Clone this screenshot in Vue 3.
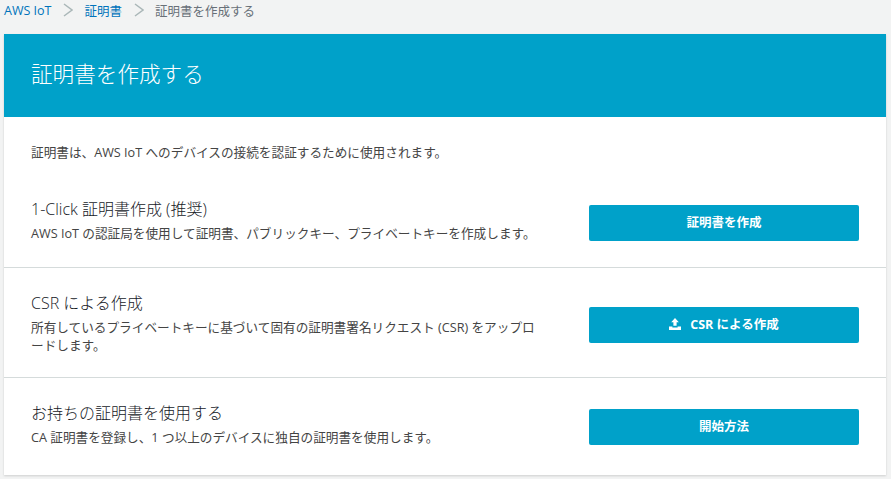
<template>
  <div class="page">
    <nav class="crumbs">
      <a>AWS IoT</a>
      <svg class="chev" viewBox="0 0 10 14"><path d="M1 1l8 6-8 6" /></svg>
      <a>証明書</a>
      <svg class="chev" viewBox="0 0 10 14"><path d="M1 1l8 6-8 6" /></svg>
      <span>証明書を作成する</span>
    </nav>

    <section class="card">
      <h1 class="head">証明書を作成する</h1>
      <p class="intro">証明書は、AWS IoT へのデバイスの接続を認証するために使用されます。</p>

      <div v-for="row in rows" :key="row.title" class="row" :class="row.cls">
        <div class="info">
          <h2>{{ row.title }}</h2>
          <p>{{ row.text }}</p>
        </div>
        <button class="btn">
          <svg v-if="row.icon" class="upload" viewBox="0 0 12 12">
            <path d="M6 0l3.8 4.2H7.6v3.6H4.4V4.2H2.2z" />
            <path d="M0 8.4h3.4v1h5.2v-1H12V12H0z" />
          </svg>
          {{ row.button }}
        </button>
      </div>
    </section>
  </div>
</template>

<script setup>
const rows = [
  {
    cls: "first",
    title: "1-Click 証明書作成 (推奨)",
    text: "AWS IoT の認証局を使用して証明書、パブリックキー、プライベートキーを作成します。",
    button: "証明書を作成",
  },
  {
    cls: "second",
    title: "CSR による作成",
    text: "所有しているプライベートキーに基づいて固有の証明書署名リクエスト (CSR) をアップロードします。",
    button: "CSR による作成",
    icon: true,
  },
  {
    cls: "third",
    title: "お持ちの証明書を使用する",
    text: "CA 証明書を登録し、1 つ以上のデバイスに独自の証明書を使用します。",
    button: "開始方法",
  },
];
</script>

<style>
body {
  background: #f2f3f3;
}
</style>

<style scoped>
.page {
  height: 479px;
  overflow: hidden;
  padding: 0 5px 0 4px;
  box-sizing: border-box;
  font-family: "Open Sans", "Noto Sans CJK JP", sans-serif;
  color: #444;
}
.crumbs {
  height: 34px;
  padding-bottom: 14px;
  box-sizing: border-box;
  display: flex;
  align-items: center;
  font-size: 12.5px;
  color: #687078;
}
.crumbs a {
  color: #0073bb;
}
.chev {
  width: 10px;
  height: 14px;
  margin: 0 11px 0 12px;
  fill: none;
  stroke: #aab7b8;
  stroke-width: 1.5;
}
.card {
  background: #fff;
  box-shadow: 0 1px 2px rgb(0 0 0 / 15%);
}
.head {
  margin: 0;
  height: 83px;
  padding: 0 0 6px 27px;
  box-sizing: border-box;
  display: flex;
  align-items: center;
  background: #00a1c9;
  color: #fff;
  font-size: 21.6px;
  font-weight: 300;
}
.intro {
  margin: 0;
  padding: 26px 27px 0;
  font-size: 12.65px;
  line-height: 18px;
}
.row {
  display: flex;
  justify-content: space-between;
  box-sizing: border-box;
  padding: 24px 27px 0;
  border-bottom: 1px solid #d5dbdb;
}
.row:last-child {
  border-bottom: none;
}
.first {
  height: 107px;
  padding-top: 37px;
}
.second {
  height: 110px;
}
.third {
  height: 97px;
}
.info {
  width: 510px;
}
.info h2 {
  margin: 0 0 4px;
  font-size: 16px;
  line-height: 22px;
  font-weight: 300;
  color: #16191f;
}
.info p {
  margin: 0;
  font-size: 12.65px;
  line-height: 18px;
}
.btn {
  width: 270px;
  height: 36px;
  margin-top: 7px;
  padding: 0 0 3px;
  border: none;
  border-radius: 2px;
  background: #00a1c9;
  color: #fff;
  font: inherit;
  font-size: 12.5px;
  font-weight: 700;
  display: flex;
  align-items: center;
  justify-content: center;
}
.second .btn {
  margin-top: 15px;
}
.upload {
  width: 12px;
  height: 12px;
  margin-right: 9px;
  fill: #fff;
}
</style>
